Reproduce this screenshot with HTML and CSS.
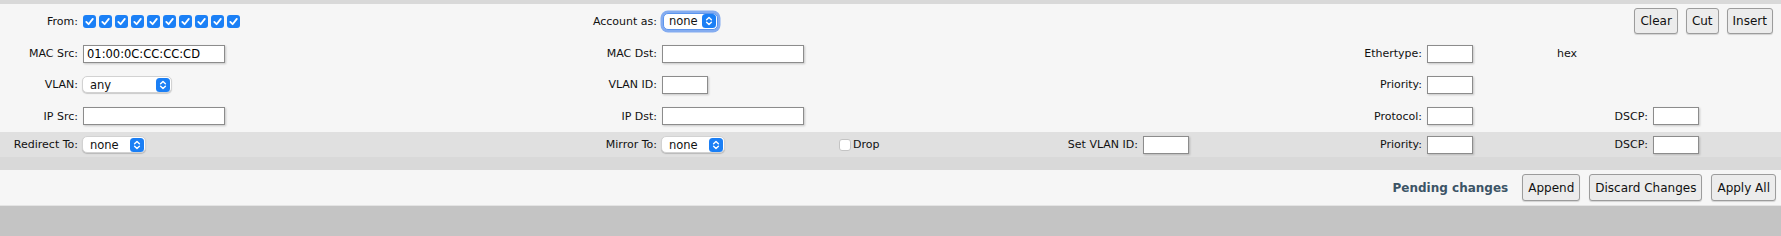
FILE: index.html
```html
<!DOCTYPE html>
<html lang="en">
<head>
    <meta charset="UTF-8">
    <title>ACL</title>
    <link rel="stylesheet" href="styles.css">
</head>
<body>

<div class="top-strip"></div>

<div class="rule-form">
    <div class="grid main-rows">
        <label class="lbl first">From:</label>
        <div class="ports">
            <span class="cb on"><svg viewBox="0 0 13 13"><polyline points="3.3,6.9 5.6,9.2 9.8,3.9"/></svg></span>
            <span class="cb on"><svg viewBox="0 0 13 13"><polyline points="3.3,6.9 5.6,9.2 9.8,3.9"/></svg></span>
            <span class="cb on"><svg viewBox="0 0 13 13"><polyline points="3.3,6.9 5.6,9.2 9.8,3.9"/></svg></span>
            <span class="cb on"><svg viewBox="0 0 13 13"><polyline points="3.3,6.9 5.6,9.2 9.8,3.9"/></svg></span>
            <span class="cb on"><svg viewBox="0 0 13 13"><polyline points="3.3,6.9 5.6,9.2 9.8,3.9"/></svg></span>
            <span class="cb on"><svg viewBox="0 0 13 13"><polyline points="3.3,6.9 5.6,9.2 9.8,3.9"/></svg></span>
            <span class="cb on"><svg viewBox="0 0 13 13"><polyline points="3.3,6.9 5.6,9.2 9.8,3.9"/></svg></span>
            <span class="cb on"><svg viewBox="0 0 13 13"><polyline points="3.3,6.9 5.6,9.2 9.8,3.9"/></svg></span>
            <span class="cb on"><svg viewBox="0 0 13 13"><polyline points="3.3,6.9 5.6,9.2 9.8,3.9"/></svg></span>
            <span class="cb on"><svg viewBox="0 0 13 13"><polyline points="3.3,6.9 5.6,9.2 9.8,3.9"/></svg></span>
        </div>
        <label class="lbl">Account as:</label>
        <div class="fld">
            <span class="sel focus w-acc"><span class="val">none</span><svg class="arr" viewBox="0 0 14 14"><rect width="14" height="14" rx="3.5"/><polyline points="4.6,5.8 7,3.4 9.4,5.8"/><polyline points="4.6,8.2 7,10.6 9.4,8.2"/></svg></span>
        </div>
        <div class="tools">
            <button class="btn">Clear</button>
            <button class="btn">Cut</button>
            <button class="btn">Insert</button>
        </div>

        <label class="lbl first">MAC Src:</label>
        <div class="fld"><input class="txt w-long" type="text" value="01:00:0C:CC:CC:CD"></div>
        <label class="lbl">MAC Dst:</label>
        <div class="fld"><input class="txt w-long" type="text"></div>
        <div class="col-h lbl">Ethertype:</div>
        <div class="fld"><input class="txt w-short" type="text"></div>
        <div class="unit">hex</div>

        <label class="lbl first">VLAN:</label>
        <div class="fld">
            <span class="sel w-vlan"><span class="val">any</span><svg class="arr" viewBox="0 0 14 14"><rect width="14" height="14" rx="3.5"/><polyline points="4.6,5.8 7,3.4 9.4,5.8"/><polyline points="4.6,8.2 7,10.6 9.4,8.2"/></svg></span>
        </div>
        <label class="lbl">VLAN ID:</label>
        <div class="fld"><input class="txt w-short" type="text"></div>
        <div class="col-h lbl">Priority:</div>
        <div class="fld"><input class="txt w-short" type="text"></div>

        <label class="lbl first">IP Src:</label>
        <div class="fld"><input class="txt w-long" type="text"></div>
        <label class="lbl">IP Dst:</label>
        <div class="fld"><input class="txt w-long" type="text"></div>
        <div class="col-h lbl">Protocol:</div>
        <div class="fld"><input class="txt w-short" type="text"></div>
        <div class="lbl">DSCP:</div>
        <div class="fld"><input class="txt w-short" type="text"></div>
    </div>

    <div class="grid action-row">
        <label class="lbl first">Redirect To:</label>
        <div class="fld">
            <span class="sel w-port"><span class="val">none</span><svg class="arr" viewBox="0 0 14 14"><rect width="14" height="14" rx="3.5"/><polyline points="4.6,5.8 7,3.4 9.4,5.8"/><polyline points="4.6,8.2 7,10.6 9.4,8.2"/></svg></span>
        </div>
        <label class="lbl">Mirror To:</label>
        <div class="fld">
            <span class="sel w-port"><span class="val">none</span><svg class="arr" viewBox="0 0 14 14"><rect width="14" height="14" rx="3.5"/><polyline points="4.6,5.8 7,3.4 9.4,5.8"/><polyline points="4.6,8.2 7,10.6 9.4,8.2"/></svg></span>
        </div>
        <div class="drop"><span class="cb"></span>Drop</div>
        <label class="lbl">Set VLAN ID:</label>
        <div class="fld"><input class="txt w-short" type="text"></div>
        <div class="lbl">Priority:</div>
        <div class="fld"><input class="txt w-short" type="text"></div>
        <div class="lbl">DSCP:</div>
        <div class="fld"><input class="txt w-short" type="text"></div>
    </div>
</div>

<div class="spacer-band"></div>

<div class="footer">
    <span class="pending">Pending changes</span>
    <button class="btn big">Append</button>
    <button class="btn big">Discard Changes</button>
    <button class="btn big">Apply All</button>
</div>

<div class="bottom"></div>

</body>
</html>
```

FILE: styles.css
```css
body {
    margin: 0;
    background-color: #c4c4c4;
    font-family: "DejaVu Sans", Verdana, sans-serif;
    font-size: 11px;
    color: #111;
}
.top-strip {
    height: 4px;
    background-color: #d9d9d9;
}
.rule-form {
    background-color: #f6f6f6;
}
.grid {
    display: grid;
    grid-template-columns: 83px 317px 262px 177px 161px 143px 157px 127px 130px 96px minmax(0, 1fr);
    align-items: center;
}
.main-rows {
    grid-template-rows: 34px 31px 31px 32px;
}
.action-row {
    height: 25px;
    background-color: #e0e0e0;
}
.lbl {
    text-align: right;
    padding-right: 5px;
    white-space: nowrap;
}
.first {
    grid-column: 1;
}
.col-h {
    grid-column: 8;
}
.fld {
    display: flex;
    align-items: center;
}
.ports {
    display: flex;
    gap: 3px;
}
.cb {
    display: inline-block;
    width: 13px;
    height: 13px;
    border-radius: 3px;
    box-sizing: border-box;
    background-color: #fff;
    border: 1px solid #b5b5b5;
}
.cb.on {
    background-color: #1b80f6;
    border: none;
}
.cb svg {
    display: block;
    width: 13px;
    height: 13px;
}
.cb polyline {
    fill: none;
    stroke: #fff;
    stroke-width: 1.8;
    stroke-linecap: round;
    stroke-linejoin: round;
}
.tools {
    grid-column: 5 / -1;
    justify-self: end;
    display: flex;
    gap: 8px;
    padding-right: 8px;
}
.btn {
    font-family: "DejaVu Sans", Verdana, sans-serif;
    font-size: 12px;
    color: #111;
    height: 26px;
    padding: 0 5px;
    background-color: #ececec;
    border: 1px solid #9c9c9c;
    border-radius: 3px;
    box-shadow: 0 1px 1px rgba(0, 0, 0, 0.15);
}
.btn.big {
    height: 27px;
}
.txt {
    box-sizing: border-box;
    height: 18px;
    margin: 0;
    padding: 0 3px;
    border: 1px solid #8c8c8c;
    background-color: #fff;
    box-shadow: 1px 1px 2px rgba(0, 0, 0, 0.2);
    font-family: "DejaVu Sans", Verdana, sans-serif;
    font-size: 11.5px;
    color: #000;
}
.w-long {
    width: 142px;
}
.w-short {
    width: 46px;
}
.sel {
    position: relative;
    display: inline-flex;
    align-items: center;
    box-sizing: border-box;
    height: 17px;
    margin-left: -1px;
    padding-left: 7px;
    background-color: #fff;
    border: 1px solid #d2d2d2;
    border-radius: 5px;
    box-shadow: 0 1px 1px rgba(0, 0, 0, 0.18);
    font-size: 11.5px;
}
.sel.focus {
    border-color: #5b95ee;
    box-shadow: 0 0 0 2.5px #84acf0;
    padding-left: 5px;
}
.arr {
    position: absolute;
    right: 1px;
    top: 0.5px;
    width: 14px;
    height: 14px;
}
.arr rect {
    fill: #1b7ff5;
}
.arr polyline {
    fill: none;
    stroke: #fff;
    stroke-width: 1.4;
    stroke-linecap: round;
    stroke-linejoin: round;
}
.w-acc {
    width: 55px;
    margin-left: 1px;
}
.w-vlan {
    width: 90px;
}
.w-port {
    width: 64px;
}
.drop {
    display: flex;
    align-items: center;
    gap: 2px;
}
.drop .cb {
    width: 12px;
    height: 12px;
    border-color: #c4c4c4;
}
.spacer-band {
    height: 13px;
    background-color: #d9d9d9;
}
.footer {
    display: flex;
    justify-content: flex-end;
    align-items: center;
    gap: 9px;
    height: 35px;
    padding-right: 5px;
    background-color: #f6f6f6;
    border-bottom: 1px solid #e4e4e4;
}
.pending {
    font-weight: bold;
    font-size: 12px;
    color: #3c5466;
    margin-right: 5px;
}
.bottom {
    height: 30px;
}
```
